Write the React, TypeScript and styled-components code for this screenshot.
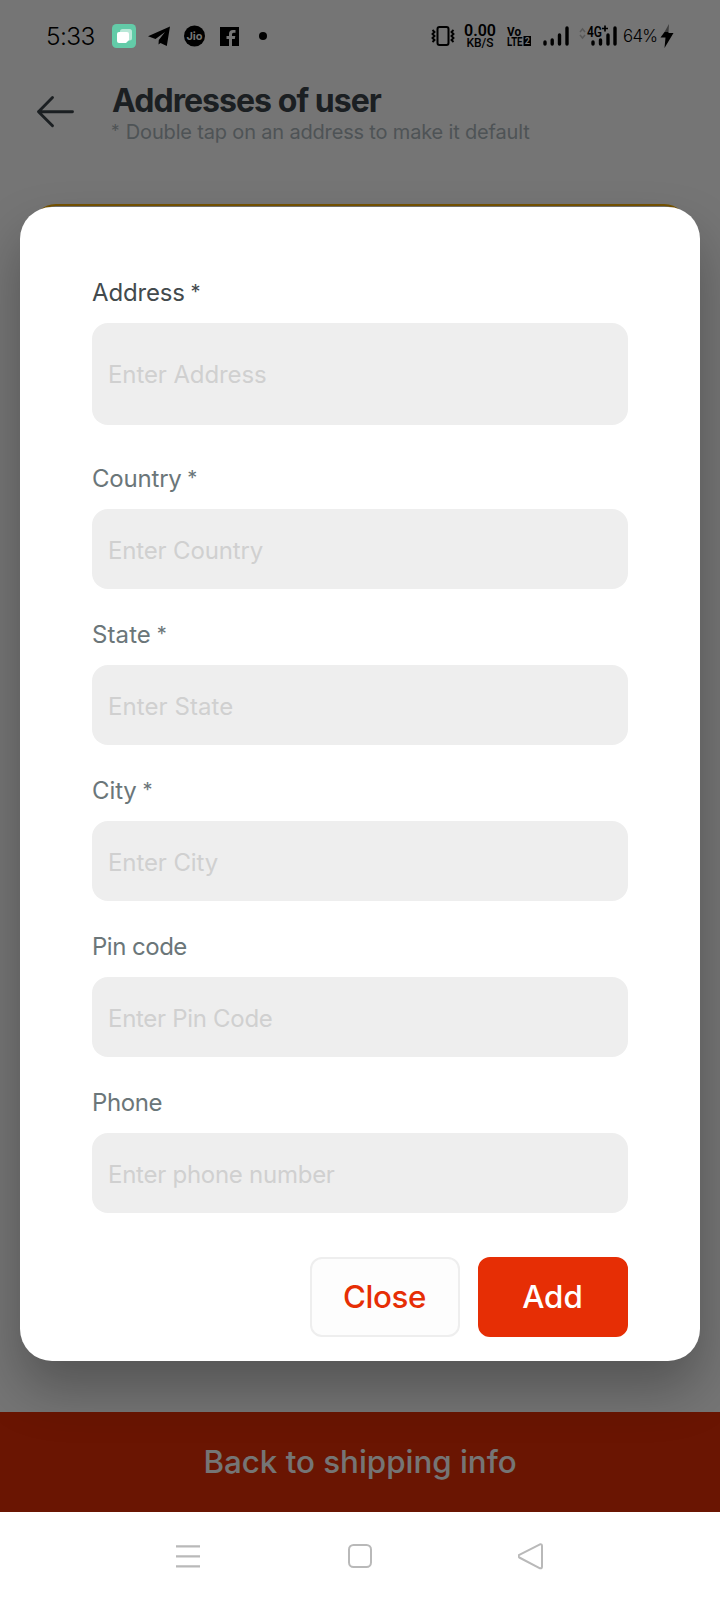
import React from 'react';
import styled, { createGlobalStyle } from 'styled-components';

const GlobalStyle = createGlobalStyle`
  * { box-sizing: border-box; }
  body { margin: 0; background: #fff; font-family: Inter, "Liberation Sans", sans-serif; }
`;

const Screen = styled.div`
  position: relative;
  width: 720px;
  height: 1600px;
  overflow: hidden;
  display: flex;
  flex-direction: column;
  background: #fff;
`;

const StatusBar = styled.div`
  position: relative;
  z-index: 2;
  height: 72px;
  padding: 0 46px 0 46px;
  display: flex;
  align-items: center;
  justify-content: space-between;
  color: #000;
`;

const StatusGroup = styled.div`
  display: flex;
  align-items: center;
  height: 100%;
`;

const Clock = styled.span`
  width: 66px;
  font-size: 24.5px;
  font-weight: 300;
  letter-spacing: -0.6px;
  line-height: 30px;
`;

const StatusIcon = styled.svg<{ $gap?: number }>`
  display: block;
  flex: none;
  overflow: visible;
  margin-right: ${({ $gap = 0 }) => $gap}px;
`;

const NetSpeed = styled.div`
  width: 32px;
  margin-right: 11px;
  display: flex;
  flex-direction: column;
  align-items: center;
  font-family: Roboto, sans-serif;
  white-space: nowrap;
`;

const NetValue = styled.span`
  font-size: 16px;
  line-height: 13px;
  font-weight: 600;
`;

const NetUnit = styled.span`
  font-size: 12px;
  line-height: 12px;
  font-weight: 500;
`;

const Battery = styled.span`
  width: 37px;
  font-size: 16.8px;
  font-weight: 300;
  line-height: 20px;
  letter-spacing: -0.7px;
  white-space: nowrap;
`;

const PageHeader = styled.header`
  height: 132px;
  padding: 11px 0 0 36px;
  display: flex;
  align-items: flex-start;
`;

const BackButton = styled.button`
  width: 76px;
  height: 40px;
  margin-top: 9px;
  padding: 0;
  border: 0;
  background: none;
  text-align: left;
`;

const Titles = styled.div`
  display: flex;
  flex-direction: column;
`;

const Title = styled.h1`
  margin: 0;
  font-size: 32px;
  line-height: 36px;
  font-weight: 700;
  letter-spacing: -0.95px;
  color: #3c454b;
`;

const Hint = styled.p`
  margin: 0;
  font-size: 20px;
  line-height: 26px;
  letter-spacing: -0.17px;
  color: #abb6bb;
`;

const Asterisk = styled.span<{ $size: number }>`
  display: inline-block;
  font-size: ${({ $size }) => $size}px;
  line-height: 1;
  transform: translate(-1px, -2px);
`;

const AddressCard = styled.div`
  flex: 1;
  margin: 0 32px 60px;
  border: 2px solid #ffb400;
  border-radius: 24px;
`;

const BackToShipping = styled.button`
  height: 100px;
  padding: 0;
  border: 0;
  background: #e62e05;
  color: #fff;
  font-family: inherit;
  font-size: 31.3px;
  font-weight: 500;
`;

const NavBar = styled.nav`
  position: relative;
  z-index: 2;
  height: 88px;
  background: #fff;
  display: flex;
  justify-content: center;
  align-items: center;
  gap: 144px;
`;

const Scrim = styled.div`
  position: absolute;
  inset: 0;
  padding: 207px 20px 0;
  background: rgba(0, 0, 0, 0.54);
`;

const Dialog = styled.form`
  height: 1154px;
  padding: 66px 72px 24px;
  display: flex;
  flex-direction: column;
  border-radius: 32px;
  background: #fff;
  box-shadow: 0 28px 52px rgba(0, 0, 0, 0.28);
`;

const Field = styled.label<{ $after: number }>`
  display: flex;
  flex-direction: column;
  gap: 10px;
  margin-bottom: ${({ $after }) => $after}px;
`;

const FieldName = styled.span<{ $active?: boolean; $track: number }>`
  height: 40px;
  font-size: 24px;
  line-height: 40px;
  letter-spacing: ${({ $track }) => $track}px;
  color: ${({ $active }) => ($active ? '#434a4d' : '#6b7679')};
`;

const TextInput = styled.input<{ $tall?: boolean; $track: number }>`
  height: ${({ $tall }) => ($tall ? 102 : 80)}px;
  padding: ${({ $tall }) => ($tall ? 0 : 2)}px 16px 0;
  border: 0;
  border-radius: 16px;
  background: #eee;
  font-family: inherit;
  font-size: 24px;
  letter-spacing: ${({ $track }) => $track}px;
  &::placeholder { color: #d0d0d0; opacity: 1; }
`;

const Actions = styled.div`
  display: flex;
  justify-content: flex-end;
  gap: 18px;
`;

const ActionButton = styled.button<{ $primary?: boolean }>`
  width: 150px;
  height: 80px;
  padding: 0 1px 0 0;
  border: 2px solid ${({ $primary }) => ($primary ? '#e62e05' : '#eee')};
  border-radius: 12px;
  background: ${({ $primary }) => ($primary ? '#e62e05' : '#fdfdfd')};
  color: ${({ $primary }) => ($primary ? '#fff' : '#e62e05')};
  font-family: inherit;
  font-size: 31.3px;
  font-weight: 500;
  letter-spacing: ${({ $primary }) => ($primary ? 0 : -0.4)}px;
`;

const fields = [
  { name: 'Address', required: true, placeholder: 'Enter Address', after: 34, track: -0.15, hintTrack: -0.1 },
  { name: 'Country', required: true, placeholder: 'Enter Country', after: 26, track: -0.2, hintTrack: -0.15 },
  { name: 'State', required: true, placeholder: 'Enter State', after: 26, track: 0.1, hintTrack: 0.08 },
  { name: 'City', required: true, placeholder: 'Enter City', after: 26, track: -0.1, hintTrack: -0.1 },
  { name: 'Pin code', required: false, placeholder: 'Enter Pin Code', after: 26, track: -0.5, hintTrack: -0.3 },
  { name: 'Phone', required: false, placeholder: 'Enter phone number', after: 44, track: -0.4, hintTrack: -0.26 },
];

export default function App() {
  return (
    <Screen>
      <GlobalStyle />
      <StatusBar>
        <StatusGroup>
          <Clock>5:33</Clock>
          <StatusIcon $gap={12} width="24" height="24" viewBox="0 0 24 24">
            <rect width="24" height="24" rx="4.500" fill="#63cba8" />
            <rect x="8" y="5" width="12" height="11.500" rx="2.500" fill="#b9e8d8" />
            <path d="M7 8h8q2 0 2 2v6l-3 3H7q-2 0-2-2v-7q0-2 2-2z" fill="#fff" />
          </StatusIcon>
          <StatusIcon $gap={14} width="22" height="20" viewBox="0 0 22 20">
            <path d="M22 0.500 18.800 20 12.500 17 10.500 18.500 10.800 14 17 6 7.500 13 0 10.300z" />
          </StatusIcon>
          <StatusIcon $gap={14} width="22" height="22" viewBox="0 0 22 22">
            <circle cx="10.500" cy="11" r="10.500" />
            <text x="10.500" y="14.800" textAnchor="middle" fontSize="11" fontWeight="700" fill="#757575" textLength="16">Jio</text>
          </StatusIcon>
          <StatusIcon $gap={20} width="19" height="19" viewBox="0 0 19 19">
            <rect width="19" height="19" />
            <path d="M9 19v-7H6.500V9H9V7q0-4 4-4h2.500v2.700h-2q-1.500 0-1.500 1.600V9h3.300l-.5 3H12v7z" fill="#757575" />
          </StatusIcon>
          <StatusIcon width="8" height="8" viewBox="0 0 8 8"><circle cx="4" cy="4" r="4" /></StatusIcon>
        </StatusGroup>
        <StatusGroup>
          <StatusIcon $gap={9} width="24" height="20" viewBox="0 0 24 20" fill="none" stroke="#000">
            <rect x="6.500" y="1" width="11" height="18" rx="2" strokeWidth="2" />
            <path d="M1.500 4l2 2-2 2 2 2-2 2 2 2-2 2M22.500 4l-2 2 2 2-2 2 2 2-2 2 2 2" strokeWidth="1.900" />
          </StatusIcon>
          <NetSpeed><NetValue>0.00</NetValue><NetUnit>KB/S</NetUnit></NetSpeed>
          <StatusIcon $gap={11} width="25" height="20" viewBox="0 0 25 20" fontFamily="Roboto" fontWeight="700">
            <text x="0" y="9.500" fontSize="13" textLength="14" lengthAdjust="spacingAndGlyphs">Vo</text>
            <text x="0" y="20" fontSize="13.500" textLength="15.500" lengthAdjust="spacingAndGlyphs">LTE</text>
            <rect x="16.500" y="10" width="7.500" height="10" />
            <text x="17.700" y="18.300" fontSize="9" fill="#757575">2</text>
          </StatusIcon>
          <StatusIcon $gap={10} width="26" height="20" viewBox="0 0 26 20" stroke="#000" strokeWidth="3.400" strokeLinecap="round">
            <path d="M2 16v2M9.200 14v4M16.500 9v9M24 2v16" />
          </StatusIcon>
          <StatusIcon $gap={6} width="38" height="20" viewBox="0 0 38 20">
            <path d="M1 6l2.500-3L6 6M1 9l2.500 3L6 9" fill="none" stroke="#595959" strokeWidth="1.500" />
            <path d="M14 16v2M21.500 14v4M29 9v9M36 2v16" stroke="#000" strokeWidth="3.400" strokeLinecap="round" />
            <text x="8" y="11" fontSize="14" fontFamily="Roboto" fontWeight="600" stroke="#757575" strokeWidth="2" paintOrder="stroke" textLength="15" lengthAdjust="spacingAndGlyphs">4G</text>
            <path d="M23 2.500h6M26 -.5v6" stroke="#000" strokeWidth="1.700" />
          </StatusIcon>
          <Battery>64%</Battery>
          <StatusIcon width="14" height="24" viewBox="0 0 14 24">
            <path d="M9 0 4.500 8H8.500z" fill="#3c3c3c" />
            <path d="M4.500 8 .5 13.500h5L4.500 24 13.500 9H8.500V8z" />
          </StatusIcon>
        </StatusGroup>
      </StatusBar>

      <PageHeader>
        <BackButton type="button" aria-label="Back">
          <svg width="40" height="40" viewBox="0 0 40 40" fill="none" stroke="#3c454b" strokeWidth="2.900" strokeLinecap="round" strokeLinejoin="round">
            <path d="M36.500 19.700H2.500M16.500 5.500 2.500 19.700l14 14" />
          </svg>
        </BackButton>
        <Titles>
          <Title>Addresses of user</Title>
          <Hint><Asterisk $size={17}>*</Asterisk> Double tap on an address to make it default</Hint>
        </Titles>
      </PageHeader>
      <AddressCard />
      <BackToShipping type="button">Back to shipping info</BackToShipping>

      <Scrim>
        <Dialog>
          {fields.map((f, i) => (
            <Field key={f.name} $after={f.after}>
              <FieldName $active={i === 0} $track={f.track}>
                {f.name}
                {f.required && <> <Asterisk $size={20}>*</Asterisk></>}
              </FieldName>
              <TextInput $tall={i === 0} $track={f.hintTrack} placeholder={f.placeholder} />
            </Field>
          ))}
          <Actions>
            <ActionButton type="button">Close</ActionButton>
            <ActionButton type="button" $primary>Add</ActionButton>
          </Actions>
        </Dialog>
      </Scrim>

      <NavBar>
        <svg width="28" height="28" viewBox="0 0 28 28" stroke="#b9b9b9" strokeWidth="2.200"><path d="M2 4.300h24M2 14.300h24M2 24.300h24" /></svg>
        <svg width="28" height="28" viewBox="0 0 28 28" fill="none" stroke="#b9b9b9" strokeWidth="2"><rect x="3" y="3" width="22" height="22" rx="4.500" /></svg>
        <svg width="28" height="28" viewBox="0 0 28 28" fill="none" stroke="#b9b9b9" strokeWidth="2" strokeLinejoin="round"><path d="M22 2.300 1.300 12.800q-1.500 1.200 0 2.700L22 26.300q2 .3 2-1.500V4q0-2-2-1.700z" /></svg>
      </NavBar>
    </Screen>
  );
}
